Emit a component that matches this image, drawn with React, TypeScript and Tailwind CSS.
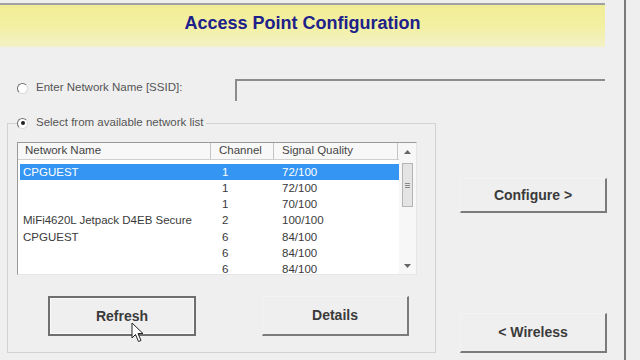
import React from "react";

const rows = [
  { name: "CPGUEST", ch: "1", q: "72/100", sel: true },
  { name: "", ch: "1", q: "72/100" },
  { name: "", ch: "1", q: "70/100" },
  { name: "MiFi4620L Jetpack D4EB Secure", ch: "2", q: "100/100" },
  { name: "CPGUEST", ch: "6", q: "84/100" },
  { name: "", ch: "6", q: "84/100" },
  { name: "", ch: "6", q: "84/100" },
];

function Radio({ checked }: { checked?: boolean }) {
  return (
    <div className="w-[11px] h-[11px] shrink-0 rounded-full border border-t-[#6f6f6f] border-l-[#6f6f6f] border-b-[#dcdcdc] border-r-[#dcdcdc] bg-white flex items-center justify-center">
      {checked && <div className="w-[4px] h-[4px] rounded-full bg-[#222]" />}
    </div>
  );
}

function FlatButton({ label, className }: { label: string; className: string }) {
  // only the bottom and right edges show, as in the shot
  return (
    <div
      className={`border-b-2 border-r-2 border-b-[#7b7b7b] border-r-[#7b7b7b] border-t border-l border-t-[#f3f3f3] border-l-[#f3f3f3] flex items-center justify-center text-[14px] font-bold text-[#3a3a3a] ${className}`}
    >
      {label}
    </div>
  );
}

export default function App() {
  return (
    <div className="relative w-[640px] h-[360px] overflow-hidden bg-[#efefef] flex font-['Liberation_Sans',Arial,sans-serif]">
      <div className="w-[624px] flex flex-col">
        {/* header */}
        <div className="mt-[3px] w-[605px] h-[2px] bg-[#a2a2a2]" />
        <div className="w-[605px] h-[42px] bg-gradient-to-b from-[#f1ed96] via-[#f3f0a2] to-[#f3f1c6] flex items-center justify-center pb-[6px]">
          <span className="text-[18px] font-bold text-[#20208a]">
            Access Point Configuration
          </span>
        </div>

        {/* SSID row */}
        <div className="mt-[32px] flex items-start h-[22px]">
          <div className="w-[235px] pl-[17px] h-[18px] flex items-center gap-[8px]">
            <Radio />
            <span className="text-[11.5px] text-[#555]">Enter Network Name [SSID]:</span>
          </div>
          <div className="w-[370px] h-[22px] border-t-2 border-l-2 border-t-[#8c8c8c] border-l-[#8c8c8c]" />
        </div>

        {/* lower section */}
        <div className="mt-[14px] flex items-start">
          <fieldset className="ml-[7px] w-[429px] border border-[#d2d2d2] pl-[9px] pb-[16px]">
            <legend className="pr-[3px] h-[16px] flex items-center gap-[8px]">
              <Radio checked />
              <span className="text-[11.5px] text-[#555]">Select from available network list</span>
            </legend>

            {/* list */}
            <div className="mt-[11px] w-[400px] h-[133px] bg-white border border-t-[#9a9a9a] border-l-[#9a9a9a] border-b-[#e6e6e6] border-r-[#e6e6e6] flex">
              <div className="w-[382px] flex flex-col">
                <div className="h-[17px] flex bg-[#f8f8f8] border-b border-[#d0d0d0] text-[11.5px] text-[#444]">
                  <div className="w-[193px] pl-[7px] flex items-center border-r border-[#c4c4c4]">Network Name</div>
                  <div className="w-[63px] pl-[8px] flex items-center border-r border-[#c4c4c4]">Channel</div>
                  <div className="w-[124px] pl-[8px] flex items-center border-r border-[#c4c4c4]">Signal Quality</div>
                </div>
                <div className="pt-[4px] pl-[2px] flex flex-col">
                  {rows.map((r, i) => (
                    <div
                      key={i}
                      className={`h-[16.3px] shrink-0 flex items-center text-[11.5px] ${
                        r.sel ? "bg-[#3595f3] text-white" : "text-[#3a3a3a]"
                      }`}
                    >
                      <div className="w-[191px] pl-[3px] whitespace-nowrap">{r.name}</div>
                      <div className="w-[63px] pl-[11px]">{r.ch}</div>
                      <div className="w-[124px] pl-[8px]">{r.q}</div>
                    </div>
                  ))}
                </div>
              </div>
              {/* scrollbar */}
              <div className="w-[17px] ml-auto flex flex-col bg-[#f7f7f7]">
                <div className="h-[17px] flex items-center justify-center">
                  <svg width="7" height="4" viewBox="0 0 7 4">
                    <path d="M0 4 L3.5 0 L7 4 Z" fill="#666" />
                  </svg>
                </div>
                <div className="flex-1 px-[3px] pt-[3px]">
                  <div className="h-[44px] bg-[#e4e4e4] border border-[#b4b4b4] flex flex-col items-center justify-center gap-[1px]">
                    <div className="w-[5px] h-[1px] bg-[#888]" />
                    <div className="w-[5px] h-[1px] bg-[#888]" />
                    <div className="w-[5px] h-[1px] bg-[#888]" />
                  </div>
                </div>
                <div className="h-[17px] flex items-center justify-center">
                  <svg width="7" height="4" viewBox="0 0 7 4">
                    <path d="M0 0 L3.5 4 L7 0 Z" fill="#666" />
                  </svg>
                </div>
              </div>
            </div>

            {/* buttons */}
            <div className="mt-[21px] flex">
              <div className="ml-[31px] w-[148px] h-[40px] border-2 border-[#6e6e6e] flex items-center justify-center">
                <div className="w-full h-full border border-[#fafafa] flex items-center justify-center text-[14px] font-bold text-[#3a3a3a]">
                  Refresh
                </div>
              </div>
              <FlatButton label="Details" className="ml-[66px] w-[147px] h-[40px]" />
            </div>
          </fieldset>

          <div className="ml-[24px] w-[147px] flex flex-col">
            <FlatButton label="Configure >" className="mt-[63px] h-[35px]" />
            <FlatButton label="< Wireless" className="mt-[100px] h-[40px]" />
          </div>
        </div>
      </div>

      {/* right divider */}
      <div className="w-[2px] h-full bg-[#7a7a7a]" />

      {/* mouse pointer */}
      <svg className="absolute left-[131px] top-[322px]" width="14" height="21" viewBox="0 0 14 21">
        <path d="M1 1 L1 16 L4.5 12.5 L7.5 19.5 L10 18.5 L7 11.5 L12 11.5 Z" fill="#fff" stroke="#222" strokeWidth="1" strokeLinejoin="round" />
      </svg>
    </div>
  );
}
